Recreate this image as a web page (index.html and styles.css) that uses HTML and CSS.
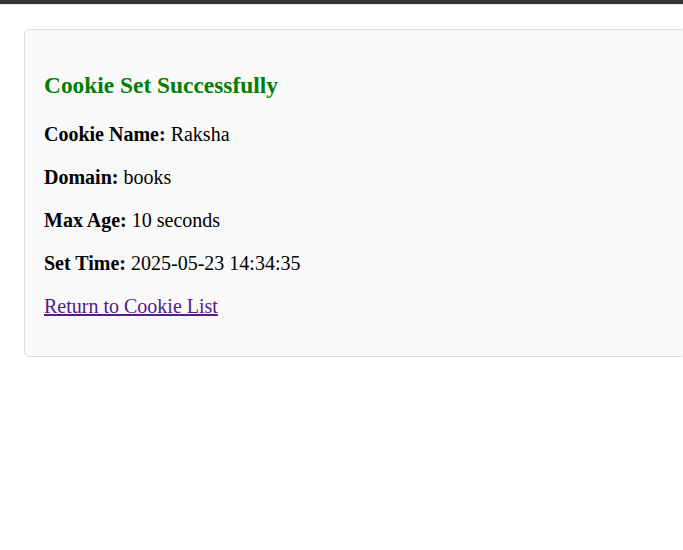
FILE: index.html
```html
<!DOCTYPE html>
<html lang="en">
<head>
<meta charset="utf-8">
<title>Cookie Set</title>
<link rel="stylesheet" href="styles.css">
</head>
<body>
<div class="topbar"></div>
<main class="page">
  <section class="card">
    <h3 class="title">Cookie Set Successfully</h3>
    <p class="row"><strong>Cookie Name:</strong> Raksha</p>
    <p class="row"><strong>Domain:</strong> books</p>
    <p class="row"><strong>Max Age:</strong> 10 seconds</p>
    <p class="row"><strong>Set Time:</strong> 2025-05-23 14:34:35</p>
    <p class="row"><a class="back" href="#">Return to Cookie List</a></p>
  </section>
</main>
</body>
</html>
```
FILE: styles.css
```css
html, body {
  margin: 0;
  padding: 0;
  background: #ffffff;
  overflow: hidden;
}
body {
  font-family: "Liberation Serif", "Times New Roman", serif;
  font-size: 20px;
  color: #000000;
}
.topbar {
  height: 4px;
  background: #363636;
  border-bottom: 1px solid #e3e3e3;
}
.page {
  padding: 24px 0 0 24px;
}
.card {
  box-sizing: border-box;
  width: 662px;
  background: #f9f9f9;
  border: 1px solid #dddddd;
  border-radius: 5px;
  padding: 19px 19px 18px;
}
.title {
  color: #008000;
  font-size: 23.4px;
  font-weight: bold;
  line-height: normal;
  margin: 23.4px 0;
}
.row {
  font-size: 20px;
  line-height: normal;
  margin: 20px 0;
}
.back {
  color: #551a8b;
  text-decoration: underline;
}
```
